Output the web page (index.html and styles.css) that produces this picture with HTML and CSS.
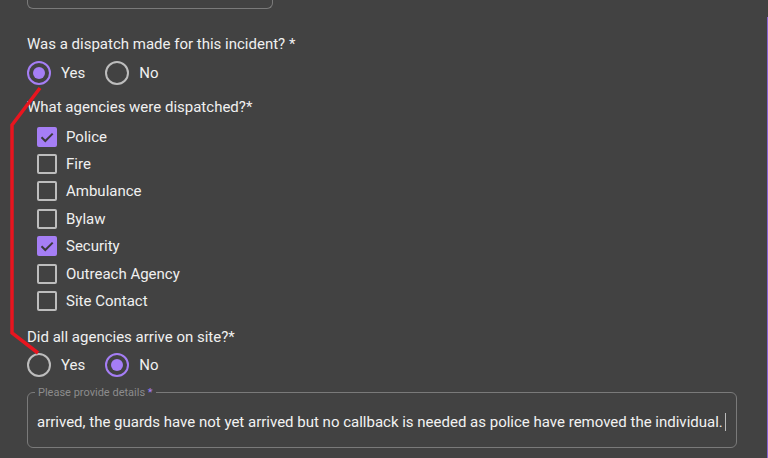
FILE: index.html
```html
<!DOCTYPE html>
<html lang="en">
<head>
    <meta charset="UTF-8">
    <meta name="viewport" content="width=device-width, initial-scale=1.0">
    <title>Dispatch</title>
    <link rel="stylesheet" href="styles.css">
</head>
<body>
    <div class="page">
        <div class="form">
            <div class="prev-field"></div>

            <div class="question q-first">Was a dispatch made for this incident? *</div>
            <div class="radios">
                <label class="radio"><span class="ring on"></span>Yes</label>
                <label class="radio"><span class="ring"></span>No</label>
            </div>

            <div class="question q-agencies">What agencies were dispatched?*</div>
            <div class="checks">
                <label class="check"><span class="box on"><svg viewBox="0 0 20 20"><path d="M4.5 10.2l3.8 3.8 7.4-7.4"/></svg></span>Police</label>
                <label class="check"><span class="box"></span>Fire</label>
                <label class="check"><span class="box"></span>Ambulance</label>
                <label class="check"><span class="box"></span>Bylaw</label>
                <label class="check"><span class="box on"><svg viewBox="0 0 20 20"><path d="M4.5 10.2l3.8 3.8 7.4-7.4"/></svg></span>Security</label>
                <label class="check"><span class="box"></span>Outreach Agency</label>
                <label class="check"><span class="box"></span>Site Contact</label>
            </div>

            <div class="question q-arrive">Did all agencies arrive on site?*</div>
            <div class="radios radios-second">
                <label class="radio"><span class="ring"></span>Yes</label>
                <label class="radio"><span class="ring on"></span>No</label>
            </div>

            <fieldset class="details">
                <legend>Please provide details <span class="req">*</span></legend>
                <div class="details-text"><span>arrived, the guards have not yet arrived but no callback is needed as police have removed the individual.</span><span class="caret"></span></div>
            </fieldset>
        </div>
        <div class="edge"></div>
    </div>

    <svg class="annotation" width="768" height="458" viewBox="0 0 768 458">
        <polyline points="40,88 12,125 12,333 38,353" />
    </svg>
</body>
</html>
```

FILE: styles.css
```css
body, html {
    margin: 0;
    height: 100%;
    background-color: #424242;
    font-family: Roboto, "Noto Sans", Arial, sans-serif;
    color: #f0f0f0;
    overflow: hidden;
}
.page {
    display: flex;
    height: 458px;
    position: relative;
}
.form {
    flex: 1;
    min-width: 0;
    padding-left: 27px;
}
.edge {
    width: 1px;
    margin-top: 17px;
    background-color: #8a63d2;
}

.prev-field {
    width: 244px;
    height: 8px;
    border: 1px solid #7a7a7a;
    border-top: none;
    border-radius: 0 0 6px 6px;
}

.question {
    font-size: 15px;
    line-height: 20px;
}
.q-first {
    margin-top: 25px;
}
.q-agencies {
    margin-top: 12px;
}
.q-arrive {
    margin-top: 12px;
}

.radios {
    display: flex;
    margin-top: 7px;
    height: 24px;
}
.radios-second {
    margin-top: 6px;
}
.radio {
    display: flex;
    align-items: center;
    font-size: 15px;
    margin-right: 20px;
}
.ring {
    width: 20px;
    height: 20px;
    border: 2px solid #bdbdbd;
    border-radius: 50%;
    margin-right: 10px;
    display: flex;
    align-items: center;
    justify-content: center;
}
.ring.on {
    border-color: #a57ef5;
}
.ring.on::after {
    content: "";
    width: 12px;
    height: 12px;
    border-radius: 50%;
    background-color: #a57ef5;
}

.checks {
    margin-top: 6px;
    padding-left: 10px;
}
.check {
    display: flex;
    align-items: center;
    height: 27.4px;
    font-size: 15px;
}
.box {
    width: 16px;
    height: 16px;
    border: 2px solid #bdbdbd;
    border-radius: 2px;
    margin-right: 9px;
    display: flex;
}
.box.on {
    background-color: #a57ef5;
    border-color: #a57ef5;
}
.box svg {
    width: 20px;
    height: 20px;
    margin: -2px;
    fill: none;
    stroke: #3a3a3a;
    stroke-width: 2;
}

.details {
    margin: 9px 0 0;
    width: 710px;
    min-width: 0;
    height: 62px;
    box-sizing: border-box;
    border: 1px solid #7a7a7a;
    border-radius: 6px;
    padding: 0 8px 0 7px;
}
.details legend {
    font-size: 11px;
    line-height: 14px;
    color: #8c8c8c;
    padding: 0 3px;
}
.details .req {
    color: #a57ef5;
}
.details-text {
    display: flex;
    align-items: center;
    white-space: nowrap;
    font-size: 15px;
    line-height: 20px;
    margin-top: 12px;
    padding-left: 2px;
    color: #f2f2f2;
}
.caret {
    flex-shrink: 0;
    width: 1px;
    height: 18px;
    margin-left: 2px;
    background-color: #bbbbbb;
}

.annotation {
    position: absolute;
    top: 0;
    left: 0;
    pointer-events: none;
}
.annotation polyline {
    fill: none;
    stroke: #e8151f;
    stroke-width: 3.5;
}
```
